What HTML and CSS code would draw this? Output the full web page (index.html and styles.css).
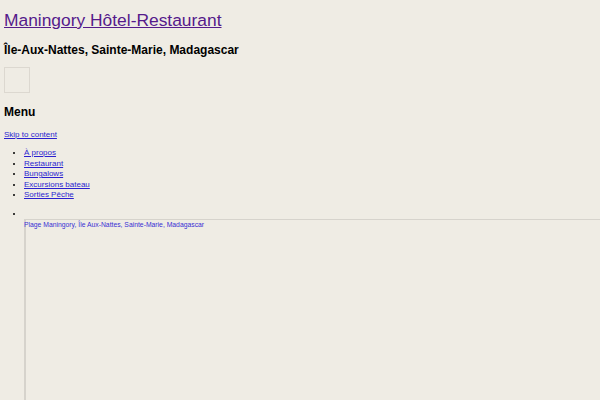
FILE: index.html
```
<!DOCTYPE html>
<html>
<head>
	<meta charset="utf-8">
	<title>Maningory Hôtel-Restaurant</title>
	<link rel="stylesheet" href="styles.css">
</head>
<body>
<div id="page">
	<div class="site-title"><a href="#" class="visited">Maningory Hôtel-Restaurant</a></div>
	<div class="site-desc">Île-Aux-Nattes, Sainte-Marie, Madagascar</div>
	<div class="toggle"></div>
	<div class="menu-title">Menu</div>
	<a href="#" class="skip">Skip to content</a>
	<ul class="nav">
		<li><a href="#">À propos</a></li>
		<li><a href="#">Restaurant</a></li>
		<li><a href="#">Bungalows</a></li>
		<li><a href="#">Excursions bateau</a></li>
		<li><a href="#">Sorties Pêche</a></li>
	</ul>
	<ul class="slides">
		<li>&nbsp;
			<div class="frame">
				<a href="#">Plage Maningory, Île Aux-Nattes, Sainte-Marie, Madagascar</a>
			</div>
		</li>
	</ul>
</div>
</body>
</html>
```

FILE: styles.css
```
html,body{
	margin: 0;
	padding: 0;
	background: #efece4;
	height: 100%;
	overflow: hidden;
}
#page{
	padding: 0 4px;
	font-family: "Liberation Sans", Arial, sans-serif;
	color: #000;
}
a{
	color: #2b1fd0;
}
.site-title{
	font-size: 17.4px;
	line-height: 20px;
	padding-top: 10px;
}
.site-title a.visited{
	color: #551a8b;
}
.site-desc{
	font-size: 12px;
	font-weight: bold;
	line-height: 14px;
	margin-top: 13px;
}
.toggle{
	width: 24px;
	height: 24px;
	border: 1px solid #dcd8d0;
	margin-top: 10px;
}
.menu-title{
	font-size: 12px;
	font-weight: bold;
	line-height: 14px;
	margin-top: 12px;
}
.skip{
	display: block;
	font-size: 8px;
	line-height: 10px;
	margin-top: 11px;
}
.nav{
	margin: 8px 0 0;
	padding-left: 20px;
	font-size: 8px;
	line-height: 10.5px;
}
.slides{
	margin: 8px 0 0;
	padding-left: 20px;
	font-size: 8px;
	line-height: 10px;
}
.frame{
	border-top: 1px solid #d6d3cc;
	box-shadow: inset 2px 0 #d6d3cc;
	height: 400px;
	margin-right: -4px;
}
.frame a{
	display: block;
	font-size: 6.8px;
	line-height: 9px;
	text-decoration: none;
	color: #3a30d4;
}
```
